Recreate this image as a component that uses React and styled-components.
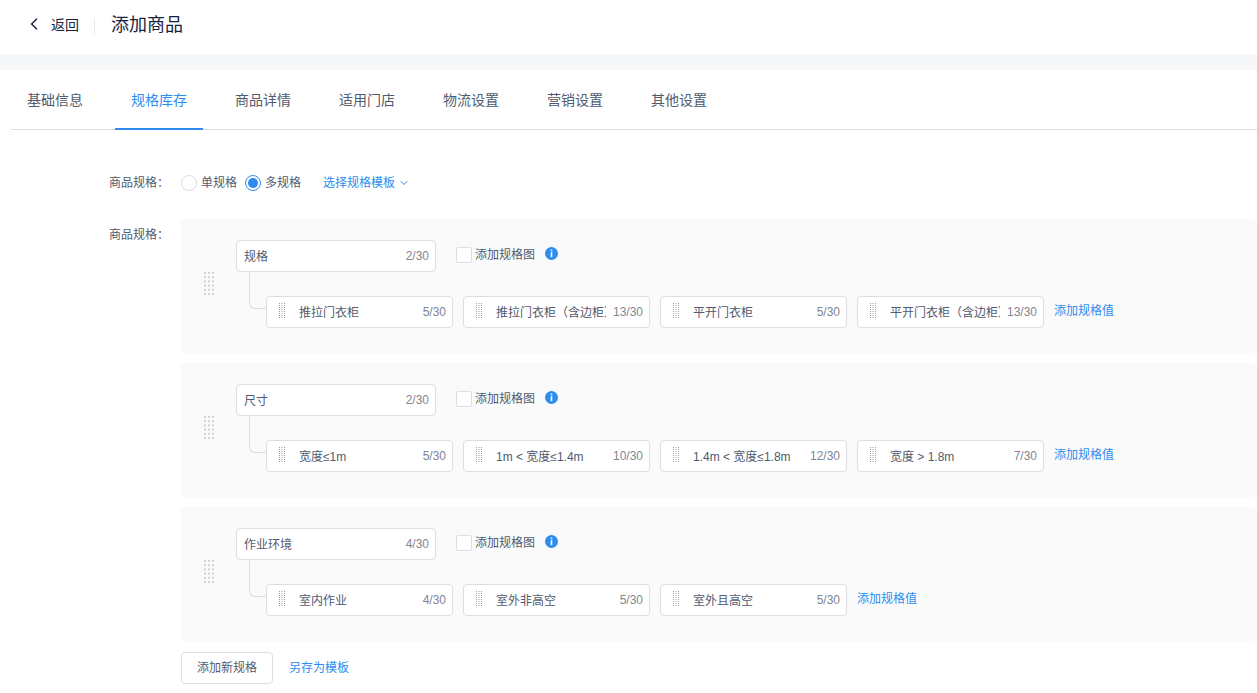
import React from "react";
import styled, { createGlobalStyle } from "styled-components";
import { ChevronDown } from "lucide-react";

const GlobalStyle = createGlobalStyle`
  html, body {
    margin: 0;
    padding: 0;
    background: #fff;
    overflow: hidden;
  }
  body {
    font-family: "Liberation Sans", "Noto Sans CJK SC", sans-serif;
    font-size: 12px;
    color: #515a6e;
  }
  * {
    box-sizing: border-box;
  }
`;

const tabs = ["基础信息", "规格库存", "商品详情", "适用门店", "物流设置", "营销设置", "其他设置"];

const specs = [
  {
    name: "规格",
    count: "2/30",
    values: [
      { text: "推拉门衣柜", count: "5/30" },
      { text: "推拉门衣柜（含边柜）", count: "13/30" },
      { text: "平开门衣柜", count: "5/30" },
      { text: "平开门衣柜（含边柜）", count: "13/30" },
    ],
  },
  {
    name: "尺寸",
    count: "2/30",
    values: [
      { text: "宽度≤1m", count: "5/30" },
      { text: "1m < 宽度≤1.4m", count: "10/30" },
      { text: "1.4m < 宽度≤1.8m", count: "12/30" },
      { text: "宽度 > 1.8m", count: "7/30" },
    ],
  },
  {
    name: "作业环境",
    count: "4/30",
    values: [
      { text: "室内作业", count: "4/30" },
      { text: "室外非高空", count: "5/30" },
      { text: "室外且高空", count: "5/30" },
    ],
  },
];

function Dots({ cols, rows, size, stepX, stepY, color }) {
  const dots = [];
  for (let r = 0; r < rows; r++) {
    for (let c = 0; c < cols; c++) {
      dots.push(<rect key={r + "-" + c} x={c * stepX} y={r * stepY} width={size} height={size} fill={color} />);
    }
  }
  return (
    <svg width={(cols - 1) * stepX + size} height={(rows - 1) * stepY + size} style={{ display: "block" }}>
      {dots}
    </svg>
  );
}

function BackIcon() {
  return (
    <svg width="10" height="12" viewBox="0 0 10 12" fill="none">
      <path d="M8 .8 2.6 6 8 11.2" stroke="#17233d" strokeWidth="1.4" />
    </svg>
  );
}

function InfoIcon() {
  return (
    <svg width="13" height="13" viewBox="0 0 13 13">
      <circle cx="6.5" cy="6.5" r="6.5" fill="#2d8cf0" />
      <rect x="5.7" y="2.6" width="1.6" height="1.6" fill="#fff" />
      <rect x="5.7" y="5.2" width="1.6" height="5" fill="#fff" />
    </svg>
  );
}

export default function App() {
  return (
    <Page>
      <GlobalStyle />
      <Header>
        <BackLink>
          <BackIcon />
          <span>返回</span>
        </BackLink>
        <Divider />
        <Title>添加商品</Title>
      </Header>
      <Band />
      <TabBar>
        {tabs.map((tab, i) => (
          <Tab key={tab} $active={i === 1}>
            {tab}
          </Tab>
        ))}
      </TabBar>
      <Form>
        <RadioRow>
          <Label>商品规格：</Label>
          <RadioItem>
            <RadioCircle />
            <LiftedText>单规格</LiftedText>
          </RadioItem>
          <RadioItem>
            <RadioCircle $checked />
            <LiftedText>多规格</LiftedText>
          </RadioItem>
          <TemplateLink>
            <LiftedText>选择规格模板</LiftedText>
            <ChevronDown size={12} strokeWidth={2} />
          </TemplateLink>
        </RadioRow>
        <SpecRow>
          <SpecLabel>商品规格：</SpecLabel>
          <SpecBody>
            {specs.map((spec) => (
              <Panel key={spec.name}>
                <PanelGrip>
                  <Dots cols={3} rows={6} size={2} stepX={4} stepY={4.2} color="#cfd1d8" />
                </PanelGrip>
                <Tree>
                  <NameRow>
                    <NameInput>
                      <InputText>{spec.name}</InputText>
                      <Count>{spec.count}</Count>
                    </NameInput>
                    <CheckLabel>
                      <CheckBox />
                      <LiftedText>添加规格图</LiftedText>
                      <InfoWrap>
                        <InfoIcon />
                      </InfoWrap>
                    </CheckLabel>
                  </NameRow>
                  <ValueRow>
                    {spec.values.map((value, i) => (
                      <ValueInput key={value.text} $first={i === 0}>
                        <ValueGrip>
                          <Dots cols={3} rows={8} size={1} stepX={2.5} stepY={2} color="#9a9fad" />
                        </ValueGrip>
                        <ValueText>{value.text}</ValueText>
                        <Count>{value.count}</Count>
                      </ValueInput>
                    ))}
                    <AddLink>添加规格值</AddLink>
                  </ValueRow>
                </Tree>
              </Panel>
            ))}
            <Actions>
              <Button>添加新规格</Button>
              <SaveLink>另存为模板</SaveLink>
            </Actions>
          </SpecBody>
        </SpecRow>
      </Form>
    </Page>
  );
}

const Page = styled.div`
  width: 1257px;
  height: 693px;
  display: flex;
  flex-direction: column;
  background: #fff;
`;

const Header = styled.header`
  height: 54px;
  display: flex;
  align-items: center;
  padding: 0 0 8px 29px;
`;

const BackLink = styled.div`
  display: flex;
  align-items: center;
  gap: 12px;
  padding-top: 2px;
  font-size: 14px;
  color: #17233d;
`;

const Divider = styled.div`
  width: 1px;
  height: 16px;
  margin: 6px 16px 0 15px;
  background: #e8eaec;
`;

const Title = styled.h1`
  margin: 0;
  font-size: 18px;
  font-weight: 400;
  color: #17233d;
`;

const Band = styled.div`
  height: 16px;
  background: #f5f7f9;
`;

const TabBar = styled.nav`
  height: 60px;
  margin-left: 11px;
  display: flex;
  gap: 16px;
  border-bottom: 1px solid #dcdee2;
`;

const Tab = styled.div`
  height: 60px;
  padding: 0 16px;
  display: flex;
  align-items: center;
  font-size: 14px;
  color: ${(p) => (p.$active ? "#2d8cf0" : "#515a6e")};
  border-bottom: 2px solid ${(p) => (p.$active ? "#2d8cf0" : "transparent")};
`;

const Form = styled.main`
  padding-left: 109px;
`;

const RadioRow = styled.div`
  margin-top: 45px;
  height: 16px;
  display: flex;
  align-items: center;
`;

const Label = styled.div`
  width: 72px;
  flex-shrink: 0;
  margin-bottom: 4px;
`;

const LiftedText = styled.span`
  margin-bottom: 4px;
`;

const RadioItem = styled.div`
  display: flex;
  align-items: center;
  gap: 4px;
  margin-right: 8px;
`;

const RadioCircle = styled.span`
  width: 16px;
  height: 16px;
  border-radius: 50%;
  background: #fff;
  border: 1px solid ${(p) => (p.$checked ? "#2d8cf0" : "#dcdee2")};
  display: flex;
  align-items: center;
  justify-content: center;
  &::after {
    content: "";
    width: 10px;
    height: 10px;
    border-radius: 50%;
    background: ${(p) => (p.$checked ? "#2d8cf0" : "transparent")};
  }
`;

const TemplateLink = styled.div`
  margin-left: 14px;
  display: flex;
  align-items: center;
  gap: 3px;
  color: #2d8cf0;
`;

const SpecRow = styled.div`
  margin-top: 28px;
  display: flex;
`;

const SpecLabel = styled(Label)`
  margin-bottom: 0;
  padding-top: 6px;
`;

const SpecBody = styled.div`
  flex: 1;
  display: flex;
  flex-direction: column;
  gap: 10px;
`;

const Panel = styled.section`
  height: 134px;
  padding: 21px 0 25px 23px;
  display: flex;
  align-items: center;
  gap: 22px;
  background: #fafafa;
  border-radius: 4px;
`;

const PanelGrip = styled.div`
  margin-bottom: 1px;
`;

const Tree = styled.div`
  display: flex;
  flex-direction: column;
  gap: 24px;
`;

const NameRow = styled.div`
  display: flex;
  align-items: flex-start;
`;

const NameInput = styled.div`
  width: 200px;
  height: 32px;
  padding: 0 6px 0 7px;
  display: flex;
  align-items: center;
  background: #fff;
  border: 1px solid #dcdee2;
  border-radius: 4px;
`;

const InputText = styled.span`
  flex: 1;
  min-width: 0;
  margin-bottom: 2px;
  color: #515a6e;
`;

const Count = styled.span`
  flex-shrink: 0;
  color: #808695;
`;

const CheckLabel = styled.div`
  margin: 7px 0 0 20px;
  display: flex;
  align-items: center;
  height: 16px;
`;

const CheckBox = styled.span`
  width: 16px;
  height: 16px;
  margin-right: 3px;
  background: #fff;
  border: 1px solid #dcdee2;
  border-radius: 2px;
`;

const InfoWrap = styled.span`
  display: flex;
  margin: -4px 0 0 10px;
`;

const ValueRow = styled.div`
  margin-left: 30px;
  display: flex;
  align-items: center;
  gap: 10px;
`;

const ValueInput = styled.div`
  position: relative;
  width: 187px;
  height: 32px;
  padding: 0 6px 0 12px;
  display: flex;
  align-items: center;
  background: #fff;
  border: 1px solid #dcdee2;
  border-radius: 4px;
  ${(p) =>
    p.$first &&
    `&::before {
      content: "";
      position: absolute;
      left: -18px;
      top: -25px;
      width: 17px;
      height: 36px;
      border-left: 1px solid #dcdee2;
      border-bottom: 1px solid #dcdee2;
      border-bottom-left-radius: 6px;
    }`}
`;

const ValueGrip = styled.div`
  flex-shrink: 0;
  margin-bottom: 3px;
`;

const ValueText = styled.span`
  flex: 1;
  min-width: 0;
  margin: 0 7px 2px 14px;
  overflow: hidden;
  white-space: nowrap;
  color: #515a6e;
`;

const AddLink = styled.span`
  margin-bottom: 6px;
  color: #2d8cf0;
`;

const Actions = styled.div`
  margin-top: 1px;
  display: flex;
  align-items: center;
  gap: 16px;
`;

const Button = styled.button`
  width: 92px;
  height: 32px;
  padding: 0 0 4px;
  font: inherit;
  color: #515a6e;
  background: #fff;
  border: 1px solid #dcdee2;
  border-radius: 4px;
`;

const SaveLink = styled.span`
  margin-bottom: 4px;
  color: #2d8cf0;
`;
